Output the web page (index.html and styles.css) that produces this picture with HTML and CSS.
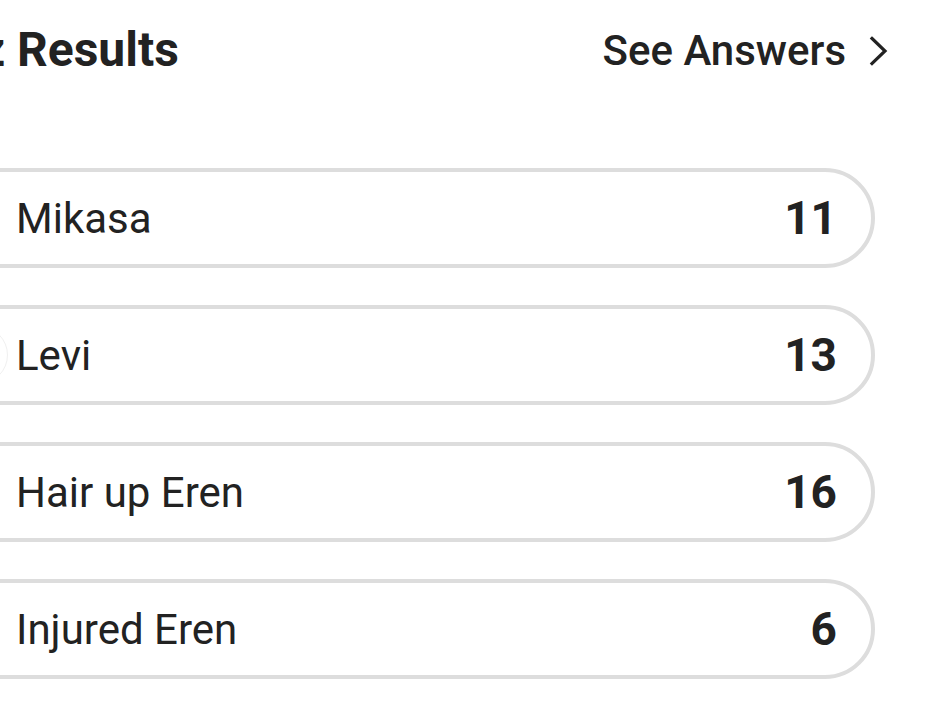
FILE: index.html
```html
<!DOCTYPE html>
<html>
<head>
<meta charset="utf-8">
<link rel="stylesheet" href="styles.css">
</head>
<body>
<div class="page">
  <div class="header">
    <h1 class="title">Quiz Results</h1>
    <a class="see">See Answers
      <svg class="chev" width="20" height="30" viewBox="0 0 20 30"><path d="M3 2.5 L16 15 L3 27.5" fill="none" stroke="#222" stroke-width="3.2" stroke-linecap="square"/></svg>
    </a>
  </div>
  <div class="list">
    <div class="pill"><span class="avatar"></span><span class="name">Mikasa</span><span class="count">11</span></div>
    <div class="pill"><span class="avatar shown"></span><span class="name">Levi</span><span class="count">13</span></div>
    <div class="pill"><span class="avatar"></span><span class="name">Hair up Eren</span><span class="count">16</span></div>
    <div class="pill"><span class="avatar"></span><span class="name">Injured Eren</span><span class="count">6</span></div>
  </div>
</div>
</body>
</html>
```
FILE: styles.css
```css
html, body {
  margin: 0;
  padding: 0;
  background: #fff;
  overflow: hidden;
}
body {
  width: 926px;
  height: 720px;
  font-family: Roboto, "Liberation Sans", sans-serif;
  color: #222;
}
.page {
  margin-left: -100px;
  width: 1000px;
}
.header {
  display: flex;
  align-items: center;
  justify-content: space-between;
  padding: 23px 11px 0 8px;
  height: 54px;
}
.title {
  margin: 0;
  font-size: 48px;
  font-weight: 700;
  line-height: 54px;
}
.see {
  display: flex;
  align-items: center;
  gap: 23px;
  font-size: 42px;
  font-weight: 500;
  line-height: 54px;
  color: #222;
  padding-top: 2px;
}
.chev { display: block; }
.list {
  display: flex;
  flex-direction: column;
  gap: 37px;
  margin-top: 91px;
  padding-right: 25px;
}
.pill {
  display: flex;
  align-items: center;
  height: 92px;
  border: 4px solid #dddddd;
  border-radius: 50px;
  padding: 0 34px 0 46px;
}
.avatar {
  width: 58px;
  height: 58px;
  border-radius: 50%;
  flex: none;
  margin-right: 8px;
}
.avatar.shown {
  border: 1px solid #f0f0f0;
  box-sizing: border-box;
}
.name {
  flex: 1;
  font-size: 42px;
  font-weight: 400;
}
.count {
  font-size: 46px;
  font-weight: 700;
}
```
